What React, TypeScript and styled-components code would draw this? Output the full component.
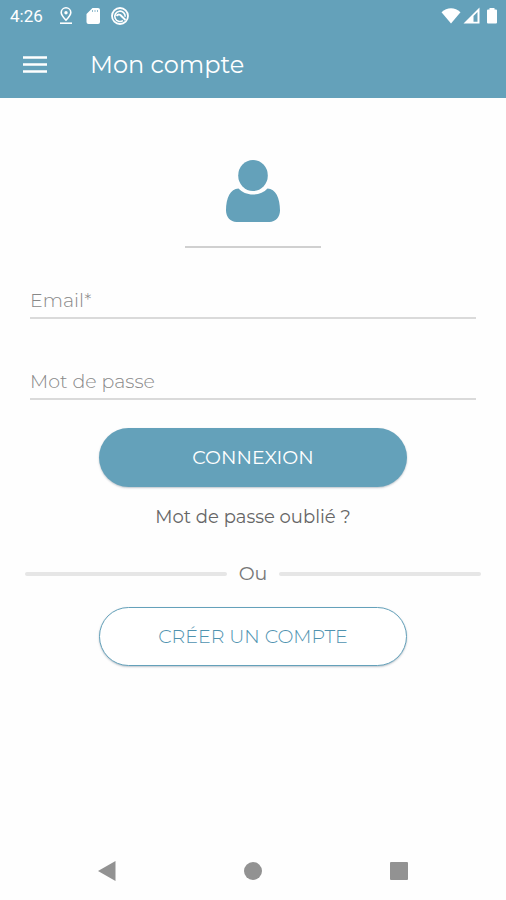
import React from 'react';
import styled, { createGlobalStyle } from 'styled-components';

const blue = '#64a1ba';

const GlobalStyle = createGlobalStyle`
  * { box-sizing: border-box; }
  body { margin: 0; background: #fefefe; }
  button, input { font-family: inherit; }
`;

const Screen = styled.div`
  display: flex;
  flex-direction: column;
  min-height: 100vh;
  font-family: Montserrat, Inter, sans-serif;
  font-weight: 400;
  color: #777;
`;

const Header = styled.header`
  background: ${blue};
  color: #fff;
`;

const StatusBar = styled.div`
  display: flex;
  align-items: center;
  justify-content: space-between;
  height: 32px;
  padding: 0 8px 0 10px;
`;

const StatusGroup = styled.div<{ $gap: number }>`
  display: flex;
  align-items: center;
  gap: ${({ $gap }) => $gap}px;
  svg { display: block; }
`;

const Clock = styled.span`
  font: 400 17px/20px Roboto, sans-serif;
  margin-right: 6px;
`;

const AppBar = styled.div`
  display: flex;
  align-items: center;
  gap: 43px;
  height: 66px;
  padding: 0 23px;
`;

const MenuButton = styled.button`
  display: flex;
  padding: 0;
  border: 0;
  background: none;
  color: inherit;
  cursor: pointer;
`;

const Title = styled.h1`
  margin: 0;
  font-size: 24px;
  line-height: 32px;
  font-weight: 400;
`;

const Main = styled.main`
  flex: 1;
  display: flex;
  flex-direction: column;
  padding: 62px 25px 24px;
`;

const Avatar = styled.div`
  align-self: center;
  display: flex;
  justify-content: center;
  width: 136px;
  padding-bottom: 24px;
  border-bottom: 2px solid #d0d0d0;
`;

const Form = styled.form`
  display: flex;
  flex-direction: column;
  padding: 35px 5px 0;
`;

const Field = styled.input`
  width: 100%;
  height: 36px;
  margin-bottom: 45px;
  padding: 0;
  border: 0;
  border-bottom: 2px solid #dadada;
  border-radius: 0;
  background: none;
  outline: 0;
  color: #555;
  font-size: 19px;
  font-weight: 300;
  &::placeholder { color: #888; opacity: 1; }
  & + & { margin-bottom: 28px; }
`;

const PillButton = styled.button<{ $filled?: boolean }>`
  align-self: center;
  width: 308px;
  max-width: 100%;
  height: 59px;
  padding: 0;
  border: ${({ $filled }) => ($filled ? '0' : `1px solid ${blue}`)};
  border-radius: 30px;
  background: ${({ $filled }) => ($filled ? blue : '#fff')};
  color: ${({ $filled }) => ($filled ? '#fff' : '#4f93b0')};
  box-shadow: 0 1px 2px rgba(70, 90, 110, 0.35);
  font-size: 19px;
  font-weight: ${({ $filled }) => ($filled ? 400 : 300)};
  cursor: pointer;
`;

const ForgotLink = styled.a`
  align-self: center;
  margin-top: 16px;
  font-size: 18px;
  line-height: 28px;
  color: #666;
  text-decoration: none;
`;

const Divider = styled.div`
  display: flex;
  align-items: center;
  gap: 12px;
  margin: 29px 0 19px;
  font-size: 19px;
  line-height: 28px;
  &::before, &::after {
    content: '';
    flex: 1;
    height: 4px;
    border-radius: 2px;
    background: #e6e6e6;
  }
`;

const NavBar = styled.nav`
  display: grid;
  grid-template-columns: repeat(3, 1fr);
  height: 58px;
  padding: 0 34px;
`;

const NavButton = styled.button`
  display: flex;
  align-items: center;
  justify-content: center;
  padding: 0;
  border: 0;
  background: none;
  color: #929292;
  cursor: pointer;
`;

export default function App() {
  return (
    <Screen>
      <GlobalStyle />
      <Header>
        <StatusBar>
          <StatusGroup $gap={10}>
            <Clock>4:26</Clock>
            <svg width="14" height="18" viewBox="0 0 14 18" fill="none" stroke="#fff" strokeWidth="1.6">
              <path d="M7 13.2C4 10.2 2.2 8 2.2 5.6a4.8 4.8 0 0 1 9.6 0C11.8 8 10 10.2 7 13.2Z" />
              <circle cx="7" cy="5.8" r="1.7" fill="#fff" stroke="none" />
              <path d="M1 16.2h12" />
            </svg>
            <svg width="18" height="18" viewBox="0 0 18 18">
              <path fill="#fff" d="M9.500 1H15a2 2 0 0 1 2 2v12a2 2 0 0 1-2 2H5.500a2 2 0 0 1-2-2V7Z" />
              <path stroke={blue} strokeWidth="1" opacity=".7" d="M9.500 3v2M12 3v2M14.500 3v2" />
            </svg>
            <svg width="18" height="18" viewBox="0 0 18 18" fill="none" stroke="#fff">
              <circle cx="9" cy="9" r="8" strokeWidth="1.800" />
              <path strokeWidth="1.600" d="M12 13.600A5.200 5.200 0 1 1 14.200 9.800" />
              <path strokeWidth="2" d="M5.500 8.800c1.500-1.700 4-1.500 4.800.2L14.500 13" />
            </svg>
          </StatusGroup>
          <StatusGroup $gap={2}>
            <svg width="20" height="18" viewBox="0 0 20 18">
              <path fill="#fff" d="M.5 5.200C6-.1 14-.1 19.500 5.200L10 16.500Z" />
            </svg>
            <svg width="17" height="18" viewBox="0 0 17 18">
              <path fill="#fff" fillRule="evenodd" d="M.5 16.500 16.500 .5v16ZM10.500 9v5.700h4V5Z" />
            </svg>
            <svg width="16" height="18" viewBox="0 0 16 18">
              <path fill="#fff" d="M7.500 1h5v1.500H14a1 1 0 0 1 1 1V15.500a1 1 0 0 1-1 1H6a1 1 0 0 1-1-1V3.500a1 1 0 0 1 1-1h1.500Z" />
            </svg>
          </StatusGroup>
        </StatusBar>
        <AppBar>
          <MenuButton type="button" aria-label="Menu">
            <svg width="24" height="18" viewBox="0 0 24 18">
              <path stroke="#fff" strokeWidth="2.600" d="M0 1.500h24M0 8.500h24M0 15.500h24" />
            </svg>
          </MenuButton>
          <Title>Mon compte</Title>
        </AppBar>
      </Header>
      <Main>
        <Avatar>
          <svg width="54" height="62" viewBox="0 0 54 62" fill={blue}>
            <ellipse cx="27" cy="15.500" rx="14.800" ry="15.500" />
            <path d="M12.500 28.500C16 32.300 21 34.500 27 34.500s11-2.200 14.500-6C49.500 28.500 54 38 54 50.500 54 57 49.500 62 43.500 62h-33C4.500 62 0 57 0 50.500 0 38 4.500 28.500 12.500 28.500Z" />
          </svg>
        </Avatar>
        <Form onSubmit={(e) => e.preventDefault()}>
          <Field type="email" aria-label="Email" placeholder="Email*" />
          <Field type="password" aria-label="Mot de passe" placeholder="Mot de passe" />
          <PillButton type="submit" $filled>CONNEXION</PillButton>
        </Form>
        <ForgotLink href="#">Mot de passe oublié ?</ForgotLink>
        <Divider>Ou</Divider>
        <PillButton type="button">CRÉER UN COMPTE</PillButton>
      </Main>
      <NavBar>
        <NavButton type="button" aria-label="Retour">
          <svg width="20" height="22" viewBox="0 0 20 22" fill="currentColor">
            <path d="M18.500 1v20L1 11Z" />
          </svg>
        </NavButton>
        <NavButton type="button" aria-label="Accueil">
          <svg width="18" height="18" viewBox="0 0 18 18" fill="currentColor">
            <circle cx="9" cy="9" r="9" />
          </svg>
        </NavButton>
        <NavButton type="button" aria-label="Applications récentes">
          <svg width="18" height="18" viewBox="0 0 18 18" fill="currentColor">
            <rect width="18" height="18" rx="1" />
          </svg>
        </NavButton>
      </NavBar>
    </Screen>
  );
}
